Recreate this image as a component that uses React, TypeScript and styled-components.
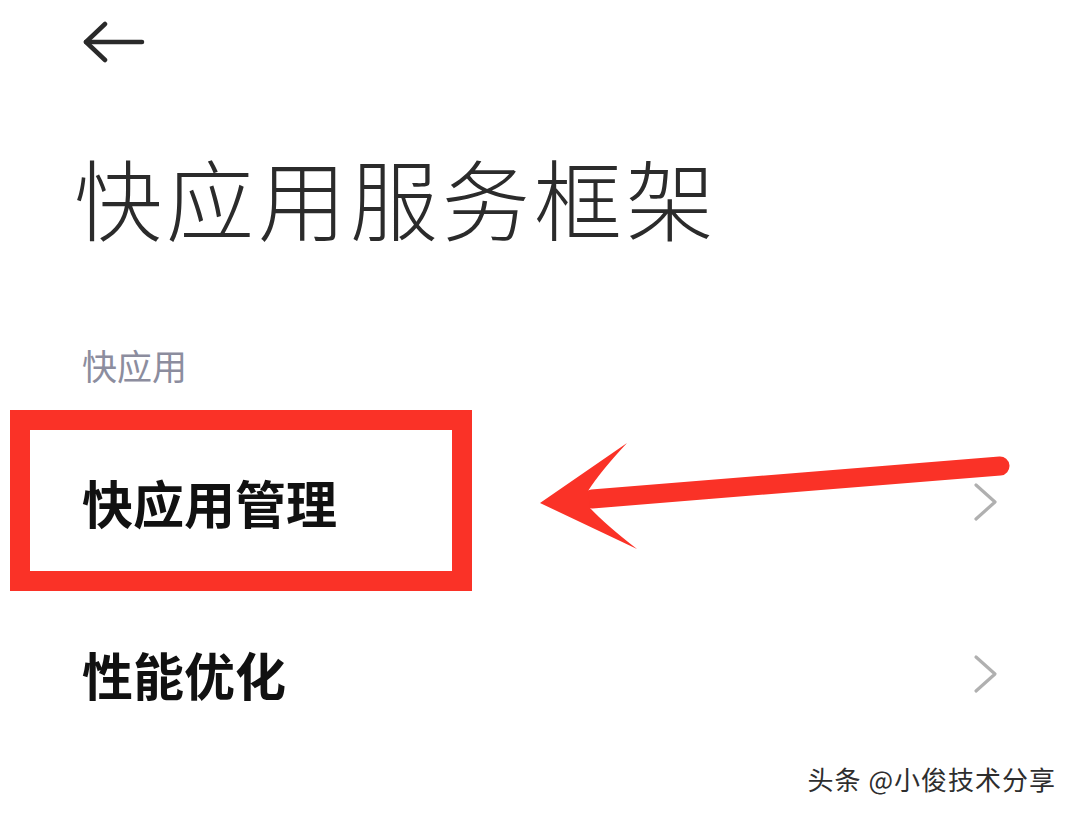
import * as React from 'react'
import styled, { createGlobalStyle } from 'styled-components'

const GlobalStyle = createGlobalStyle`
  html, body {
    margin: 0;
    padding: 0;
    background: #ffffff;
  }
  body {
    font-family: "Noto Sans CJK SC", "Noto Sans", sans-serif;
  }
`

const Page = styled.div`
  position: relative;
  width: 1080px;
  height: 814px;
  overflow: hidden;
  background: #ffffff;
  display: flex;
  flex-direction: column;
`

const Header = styled.div`
  height: 88px;
  display: flex;
  align-items: center;
  padding-left: 83px;
  box-sizing: border-box;
  margin-top: -1px;
`

const BackButton = styled.button`
  border: 0;
  background: none;
  padding: 0;
  width: 64px;
  height: 44px;
  display: flex;
  align-items: center;
  color: #2a2a2a;
`

const Title = styled.h1`
  margin: 65px 0 0 0;
  padding-left: 74px;
  font-size: 88px;
  line-height: 1;
  font-weight: 300;
  letter-spacing: 4px;
  color: #2b2b2b;
`

const SectionLabel = styled.div`
  margin-top: 107px;
  padding-left: 82px;
  font-size: 35px;
  line-height: 1;
  color: #8c8d9e;
`

const List = styled.div`
  margin-top: 34px;
  display: flex;
  flex-direction: column;
`

const Row = styled.div`
  position: relative;
  height: 172px;
  display: flex;
  align-items: center;
  justify-content: space-between;
  padding: 0 80px 0 82px;
`

const RowText = styled.span`
  font-size: 51px;
  line-height: 1;
  font-weight: 700;
  color: #111111;
`

const Chevron = styled.svg`
  width: 28px;
  height: 40px;
  color: #b0b0b0;
`

const Highlight = styled.div`
  position: absolute;
  left: 10px;
  top: -6px;
  width: 462px;
  height: 181px;
  box-sizing: border-box;
  border: 20px solid #fa3227;
  pointer-events: none;
`

const Annotation = styled.svg`
  position: absolute;
  left: 0;
  top: 0;
  width: 1080px;
  height: 814px;
  pointer-events: none;
`

const Watermark = styled.div`
  position: absolute;
  right: 24px;
  bottom: 22px;
  font-size: 26px;
  line-height: 1;
  color: #2e2e2e;
  letter-spacing: 1px;
  text-shadow: 1px 1px 0 #ffffff, -1px -1px 0 #ffffff;
`

const ChevronIcon = () => (
  <Chevron viewBox="0 0 28 40" fill="none">
    <path d="M4 3 L23 20 L4 37" stroke="currentColor" strokeWidth="3.2" strokeLinecap="round" strokeLinejoin="round" />
  </Chevron>
)

const App = () => {
  return (
    <Page>
      <GlobalStyle />
      <Header>
        <BackButton aria-label="back">
          <svg width="62" height="44" viewBox="0 0 62 44" fill="none">
            <path d="M3 21 H59" stroke="currentColor" strokeWidth="4.5" strokeLinecap="round" />
            <path d="M22 3 L3 21 L22 39" stroke="currentColor" strokeWidth="4.5" strokeLinecap="round" strokeLinejoin="round" />
          </svg>
        </BackButton>
      </Header>
      <Title>快应用服务框架</Title>
      <SectionLabel>快应用</SectionLabel>
      <List>
        <Row>
          <RowText>快应用管理</RowText>
          <ChevronIcon />
          <Highlight />
        </Row>
        <Row>
          <RowText>性能优化</RowText>
          <ChevronIcon />
        </Row>
      </List>
      <Annotation viewBox="0 0 1080 814">
        <path d="M1000 466 L592 499" stroke="#fa3227" strokeWidth="19" strokeLinecap="round" />
        <path
          d="M540 503 L627 443 Q600 472 588 491 L590 508 Q606 525 637 549 Z"
          fill="#fa3227"
        />
      </Annotation>
      <Watermark>头条 @小俊技术分享</Watermark>
    </Page>
  )
}

export default App
